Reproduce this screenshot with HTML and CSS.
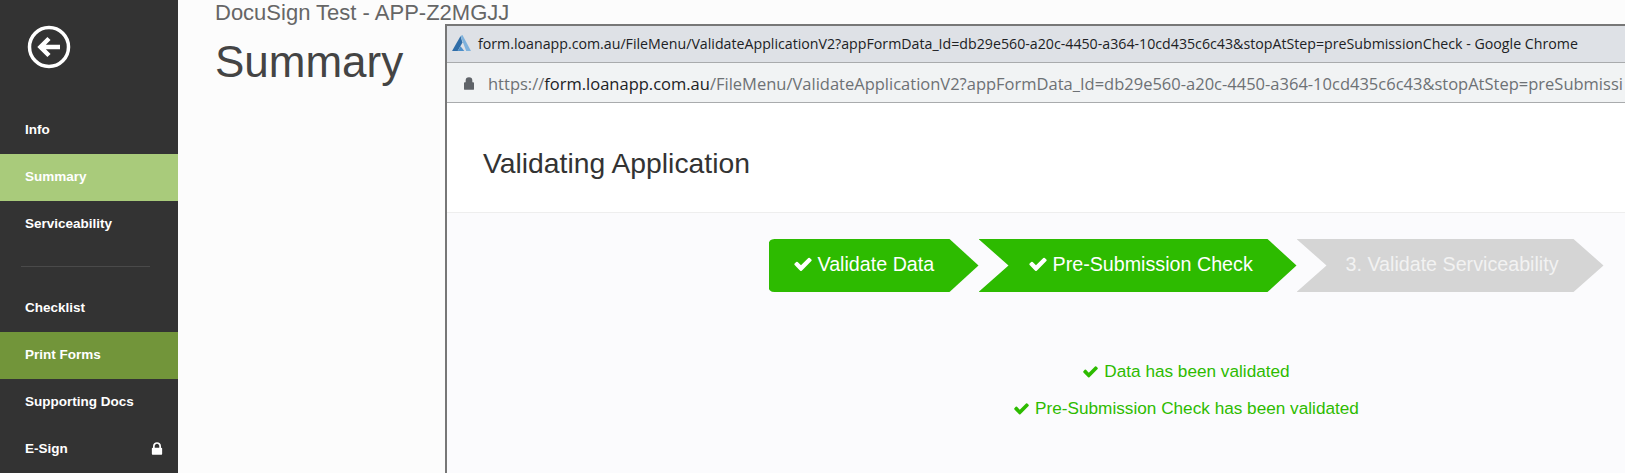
FILE: index.html
```html
<!DOCTYPE html>
<html lang="en">
<head>
  <meta charset="UTF-8">
  <meta name="viewport" content="width=device-width, initial-scale=1.0">
  <title>Summary</title>
  <link rel="stylesheet" href="styles.css">
</head>
<body>
  <div class="page">
    <nav class="sidebar">
      <a class="back" href="#">
        <svg width="44" height="44" viewBox="0 0 44 44">
          <circle cx="22" cy="22" r="19.5" fill="none" stroke="#fff" stroke-width="3.5"/>
          <path d="M33 22H14M22 13.5 13.5 22l8.500 8.500" fill="none" stroke="#fff" stroke-width="4.500"/>
        </svg>
      </a>
      <ul class="menu">
        <li>Info</li>
        <li class="light">Summary</li>
        <li>Serviceability</li>
      </ul>
      <div class="divider"></div>
      <ul class="menu">
        <li>Checklist</li>
        <li class="dark">Print Forms</li>
        <li>Supporting Docs</li>
        <li class="locked">
          E-Sign
          <svg width="16" height="16" viewBox="0 0 1792 1792"><path fill="#fff" d="M640 768h512v-192q0-106-75-181t-181-75-181 75-75 181v192zm832 96v576q0 40-28 68t-68 28h-960q-40 0-68-28t-28-68v-576q0-40 28-68t68-28h32v-192q0-184 132-316t316-132 316 132 132 316v192h32q40 0 68 28t28 68z"/></svg>
        </li>
      </ul>
    </nav>
    <main class="content">
      <p class="app-name">DocuSign Test - APP-Z2MGJJ</p>
      <h1>Summary</h1>
    </main>
  </div>

  <div class="popup">
    <div class="titlebar">
      <svg width="19" height="17" viewBox="0 0 20 18">
        <path fill="#2f6da8" d="M9 1 0 17h6l5-9z"/>
        <path fill="#7fb2dc" d="M9 1l2-1 9 17h-5z"/>
        <path fill="#4c8fca" d="M6 17l3-5 4 5z"/>
      </svg>
      <span>form.loanapp.com.au/FileMenu/ValidateApplicationV2?appFormData_Id=db29e560-a20c-4450-a364-10cd435c6c43&amp;stopAtStep=preSubmissionCheck - Google Chrome</span>
    </div>
    <div class="urlbar">
      <svg width="10" height="13" viewBox="0 0 12 15"><path fill="#5f6368" d="M3.500 6V4a2.500 2.500 0 0 1 5 0v2zM2 6V4a4 4 0 0 1 8 0v2h1a1 1 0 0 1 1 1v7a1 1 0 0 1-1 1H1a1 1 0 0 1-1-1V7a1 1 0 0 1 1-1z"/></svg>
      <span>https://<b>form.loanapp.com.au</b>/FileMenu/ValidateApplicationV2?appFormData_Id=db29e560-a20c-4450-a364-10cd435c6c43&amp;stopAtStep=preSubmissi</span>
    </div>
    <div class="popup-head">
      <h2>Validating Application</h2>
    </div>
    <div class="popup-body">
      <div class="steps">
        <div class="step step-first">
          <svg class="check" width="20" height="20" viewBox="0 0 1792 1792"><path fill="#fff" d="M1671 566q0 40-28 68l-724 724-136 136q-28 28-68 28t-68-28l-136-136-362-362q-28-28-28-68t28-68l136-136q28-28 68-28t68 28l294 295 656-657q28-28 68-28t68 28l136 136q28 28 28 68z"/></svg>
          Validate Data
        </div>
        <div class="step step-second">
          <svg class="check" width="20" height="20" viewBox="0 0 1792 1792"><path fill="#fff" d="M1671 566q0 40-28 68l-724 724-136 136q-28 28-68 28t-68-28l-136-136-362-362q-28-28-28-68t28-68l136-136q28-28 68-28t68 28l294 295 656-657q28-28 68-28t68 28l136 136q28 28 28 68z"/></svg>
          Pre-Submission Check
        </div>
        <div class="step step-third">3. Validate Serviceability</div>
      </div>
      <p class="message">
        <svg width="17" height="17" viewBox="0 0 1792 1792"><path fill="#2dbb00" d="M1671 566q0 40-28 68l-724 724-136 136q-28 28-68 28t-68-28l-136-136-362-362q-28-28-28-68t28-68l136-136q28-28 68-28t68 28l294 295 656-657q28-28 68-28t68 28l136 136q28 28 28 68z"/></svg>
        Data has been validated
      </p>
      <p class="message">
        <svg width="17" height="17" viewBox="0 0 1792 1792"><path fill="#2dbb00" d="M1671 566q0 40-28 68l-724 724-136 136q-28 28-68 28t-68-28l-136-136-362-362q-28-28-28-68t28-68l136-136q28-28 68-28t68 28l294 295 656-657q28-28 68-28t68 28l136 136q28 28 28 68z"/></svg>
        Pre-Submission Check has been validated
      </p>
    </div>
  </div>
</body>
</html>
```

FILE: styles.css
```css
* {
  margin: 0;
  padding: 0;
  box-sizing: border-box;
}
html, body {
  height: 100%;
  overflow: hidden;
}
body {
  font-family: "Liberation Sans", Arial, sans-serif;
  background: #fcfcfc;
  position: relative;
}
.page {
  display: flex;
  height: 473px;
}
.sidebar {
  width: 178px;
  flex-shrink: 0;
  background: #333;
  color: #fff;
}
.back {
  display: block;
  height: 107px;
  padding: 25px 0 0 27px;
}
.menu {
  list-style: none;
}
.menu li {
  height: 47px;
  display: flex;
  align-items: center;
  justify-content: space-between;
  padding: 0 13px 2px 25px;
  font-size: 13.500px;
  font-weight: bold;
}
.menu .light {
  background: #a9cb7b;
}
.menu .dark {
  background: #72953a;
}
.divider {
  height: 1px;
  margin: 18px 28px 18px 21px;
  background: #4a4a4a;
}
.content {
  padding-left: 37px;
  color: #555;
}
.app-name {
  font-size: 22px;
  line-height: 25px;
  color: #666;
}
h1 {
  font-weight: normal;
  font-size: 44px;
  line-height: 56px;
  margin-top: 9px;
  color: #444;
}
.popup {
  position: absolute;
  left: 445px;
  right: 0;
  top: 24px;
  bottom: 0;
  border-left: 2px solid #777;
  border-top: 2px solid #777;
  background: #fff;
  display: flex;
  flex-direction: column;
}
.titlebar {
  height: 37px;
  flex-shrink: 0;
  display: flex;
  align-items: center;
  gap: 7px;
  padding: 0 0 2px 5px;
  background: #dee1e6;
  border-bottom: 1px solid #a9abad;
  font-family: "Open Sans", sans-serif;
  font-size: 14.200px;
  color: #202124;
  white-space: nowrap;
}
.urlbar {
  height: 40px;
  flex-shrink: 0;
  display: flex;
  align-items: center;
  gap: 14px;
  padding: 1px 0 0 17px;
  background: #f1f3f4;
  border-bottom: 1px solid #a9abad;
  font-family: "Open Sans", sans-serif;
  font-size: 16.500px;
  color: #6d7175;
  white-space: nowrap;
}
.urlbar b {
  font-weight: normal;
  color: #202124;
}
.popup-head {
  height: 110px;
  flex-shrink: 0;
  display: flex;
  align-items: center;
  padding: 12px 0 0 36px;
  border-bottom: 1px solid #eee;
}
h2 {
  font-weight: normal;
  font-size: 28.300px;
  color: #333;
}
.popup-body {
  flex: 1;
  background: #fbfbfd;
  padding: 26px 0 0 300px;
}
.steps {
  display: flex;
  justify-content: center;
  margin-bottom: 61px;
}
.step {
  height: 53px;
  display: flex;
  align-items: center;
  gap: 5px;
  padding-bottom: 3px;
  font-size: 19.700px;
  color: #fff;
  background: #2dbb00;
}
.step-first {
  width: 210px;
  padding-left: 24px;
  clip-path: path("M6 0H181L210 26.500 181 53H6Q0 53 0 47V6Q0 0 6 0Z");
}
.step-second {
  width: 318px;
  padding-left: 49px;
  clip-path: path("M0 0H289L318 26.500 289 53H0L30 26.500Z");
}
.step-third {
  width: 307px;
  padding-left: 49px;
  color: #f2f2f2;
  background: #d5d5d5;
  clip-path: path("M0 0H277L307 26.500 277 53H0L30 26.500Z");
}
.message {
  display: flex;
  justify-content: center;
  align-items: center;
  gap: 5px;
  height: 37px;
  font-size: 17.200px;
  color: #2dbb00;
}
```
